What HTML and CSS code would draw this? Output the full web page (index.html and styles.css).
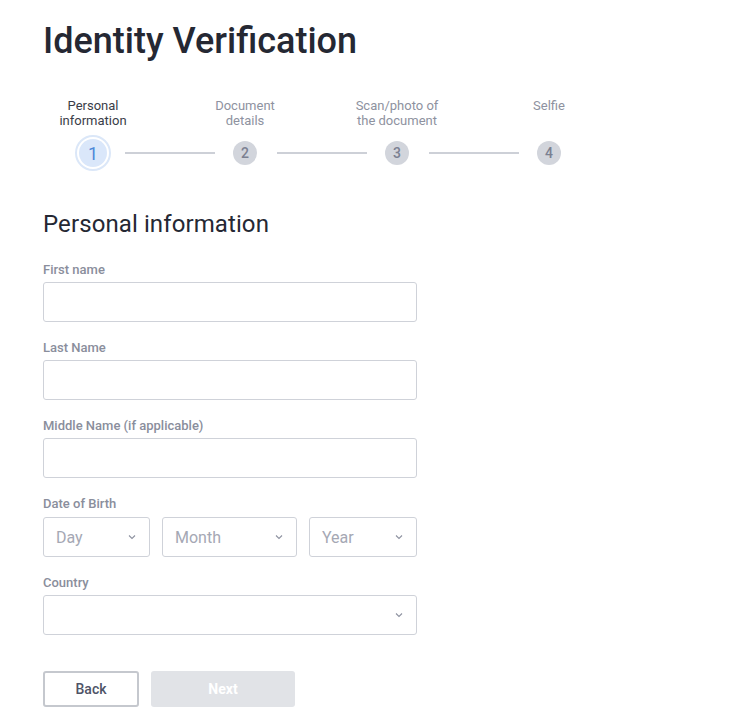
FILE: index.html
```html
<!DOCTYPE html>
<html lang="en">
<head>
<meta charset="utf-8">
<title>Identity Verification</title>
<link rel="stylesheet" href="styles.css">
</head>
<body>
<main class="page">
  <h1 class="title">Identity Verification</h1>

  <div class="stepper">
    <div class="step-labels">
      <div class="step-label active">Personal<br>information</div>
      <div class="step-label">Document<br>details</div>
      <div class="step-label">Scan/photo of<br>the document</div>
      <div class="step-label">Selfie</div>
    </div>
    <div class="step-dots">
      <div class="dot dot-active"><span class="dot-inner">1</span></div>
      <div class="line line-first"></div>
      <div class="dot">2</div>
      <div class="line"></div>
      <div class="dot">3</div>
      <div class="line"></div>
      <div class="dot">4</div>
    </div>
  </div>

  <h2 class="subtitle">Personal information</h2>

  <form class="form">
    <div class="field">
      <label class="label">First name</label>
      <input class="input" type="text">
    </div>
    <div class="field">
      <label class="label">Last Name</label>
      <input class="input" type="text">
    </div>
    <div class="field">
      <label class="label">Middle Name (if applicable)</label>
      <input class="input" type="text">
    </div>
    <div class="field field-dob">
      <label class="label">Date of Birth</label>
      <div class="dob-row">
        <div class="select sel-day"><span class="placeholder">Day</span><svg class="chev" width="8" height="6" viewBox="0 0 8 6"><polyline points="1,1.5 4,4.5 7,1.5" fill="none" stroke="#8e92a0" stroke-width="1.1"/></svg></div>
        <div class="select sel-month"><span class="placeholder">Month</span><svg class="chev" width="8" height="6" viewBox="0 0 8 6"><polyline points="1,1.5 4,4.5 7,1.5" fill="none" stroke="#8e92a0" stroke-width="1.1"/></svg></div>
        <div class="select sel-year"><span class="placeholder">Year</span><svg class="chev" width="8" height="6" viewBox="0 0 8 6"><polyline points="1,1.5 4,4.5 7,1.5" fill="none" stroke="#8e92a0" stroke-width="1.1"/></svg></div>
      </div>
    </div>
    <div class="field">
      <label class="label">Country</label>
      <div class="select sel-country"><span class="placeholder"></span><svg class="chev" width="8" height="6" viewBox="0 0 8 6"><polyline points="1,1.5 4,4.5 7,1.5" fill="none" stroke="#8e92a0" stroke-width="1.1"/></svg></div>
    </div>

    <div class="actions">
      <button type="button" class="btn btn-back">Back</button>
      <button type="button" class="btn btn-next">Next</button>
    </div>
  </form>
</main>
</body>
</html>
```

FILE: styles.css
```css
* { box-sizing: border-box; }

html, body {
  margin: 0;
  padding: 0;
  background: #ffffff;
}

body {
  font-family: Roboto, "Liberation Sans", Arial, sans-serif;
  color: #262a37;
}

.page {
  padding: 20px 0 0 43px;
}

.title {
  margin: 0;
  font-size: 36px;
  line-height: 42px;
  font-weight: 500;
  color: #252833;
  letter-spacing: 0;
}

.stepper {
  margin-top: 36px;
}

.step-labels {
  display: grid;
  grid-template-columns: repeat(4, 152px);
  margin-left: -26px;
}

.step-label {
  text-align: center;
  font-size: 13px;
  line-height: 15px;
  color: #8e92a0;
}

.step-label.active {
  color: #3a3d48;
}

.step-dots {
  display: flex;
  align-items: center;
  height: 36px;
  margin-top: 7px;
  margin-left: 32px;
}

.dot {
  width: 24px;
  height: 24px;
  border-radius: 50%;
  background: #d2d5dc;
  color: #7b8091;
  font-size: 14px;
  font-weight: 500;
  display: flex;
  align-items: center;
  justify-content: center;
  flex-shrink: 0;
}

.dot-active {
  width: 36px;
  height: 36px;
  background: #ffffff;
  border: 2px solid #dbe7f8;
  padding: 2px;
}

.dot-inner {
  width: 28px;
  height: 28px;
  border-radius: 50%;
  background: #dae7fa;
  color: #4d87d8;
  font-size: 18px;
  font-weight: 400;
  display: flex;
  align-items: center;
  justify-content: center;
}

.line {
  width: 90px;
  height: 2px;
  background: #cdd0d7;
  margin: 0 18px 0 20px;
  flex-shrink: 0;
}

.line-first {
  margin-left: 14px;
}

.subtitle {
  margin: 39px 0 0;
  font-size: 24px;
  line-height: 28px;
  font-weight: 400;
  color: #252833;
  letter-spacing: 0.1px;
}

.form {
  margin-top: 24px;
  width: 374px;
}

.field {
  margin-bottom: 18px;
}

.label {
  display: block;
  font-size: 13px;
  line-height: 16px;
  font-weight: 500;
  color: #8a8e9c;
  margin-bottom: 4px;
}

.field-dob .label {
  margin-bottom: 5px;
}

.input {
  display: block;
  width: 374px;
  height: 40px;
  border: 1px solid #cfd2d9;
  border-radius: 3px;
  background: #ffffff;
  font: inherit;
  padding: 0 12px;
  outline: none;
}

.dob-row {
  display: flex;
  gap: 12px;
}

.select {
  height: 40px;
  border: 1px solid #cfd2d9;
  border-radius: 3px;
  background: #ffffff;
  display: flex;
  align-items: center;
  justify-content: space-between;
  padding: 0 13px 0 12px;
}

.sel-day { width: 107px; }
.sel-month { width: 135px; }
.sel-year { width: 108px; }
.sel-country { width: 374px; }

.placeholder {
  font-size: 16px;
  color: #a5a8b4;
}

.chev {
  display: block;
  flex-shrink: 0;
}

.actions {
  display: flex;
  gap: 12px;
  margin-top: 36px;
}

.btn {
  height: 36px;
  border-radius: 3px;
  font-family: Roboto, "Liberation Sans", Arial, sans-serif;
  font-size: 14px;
  cursor: pointer;
}

.btn-back {
  width: 96px;
  background: #ffffff;
  border: 2px solid #c5c8ce;
  color: #4f5467;
  font-weight: 500;
}

.btn-next {
  width: 144px;
  background: #e1e3e7;
  border: none;
  color: #ffffff;
  font-weight: 700;
}
```
